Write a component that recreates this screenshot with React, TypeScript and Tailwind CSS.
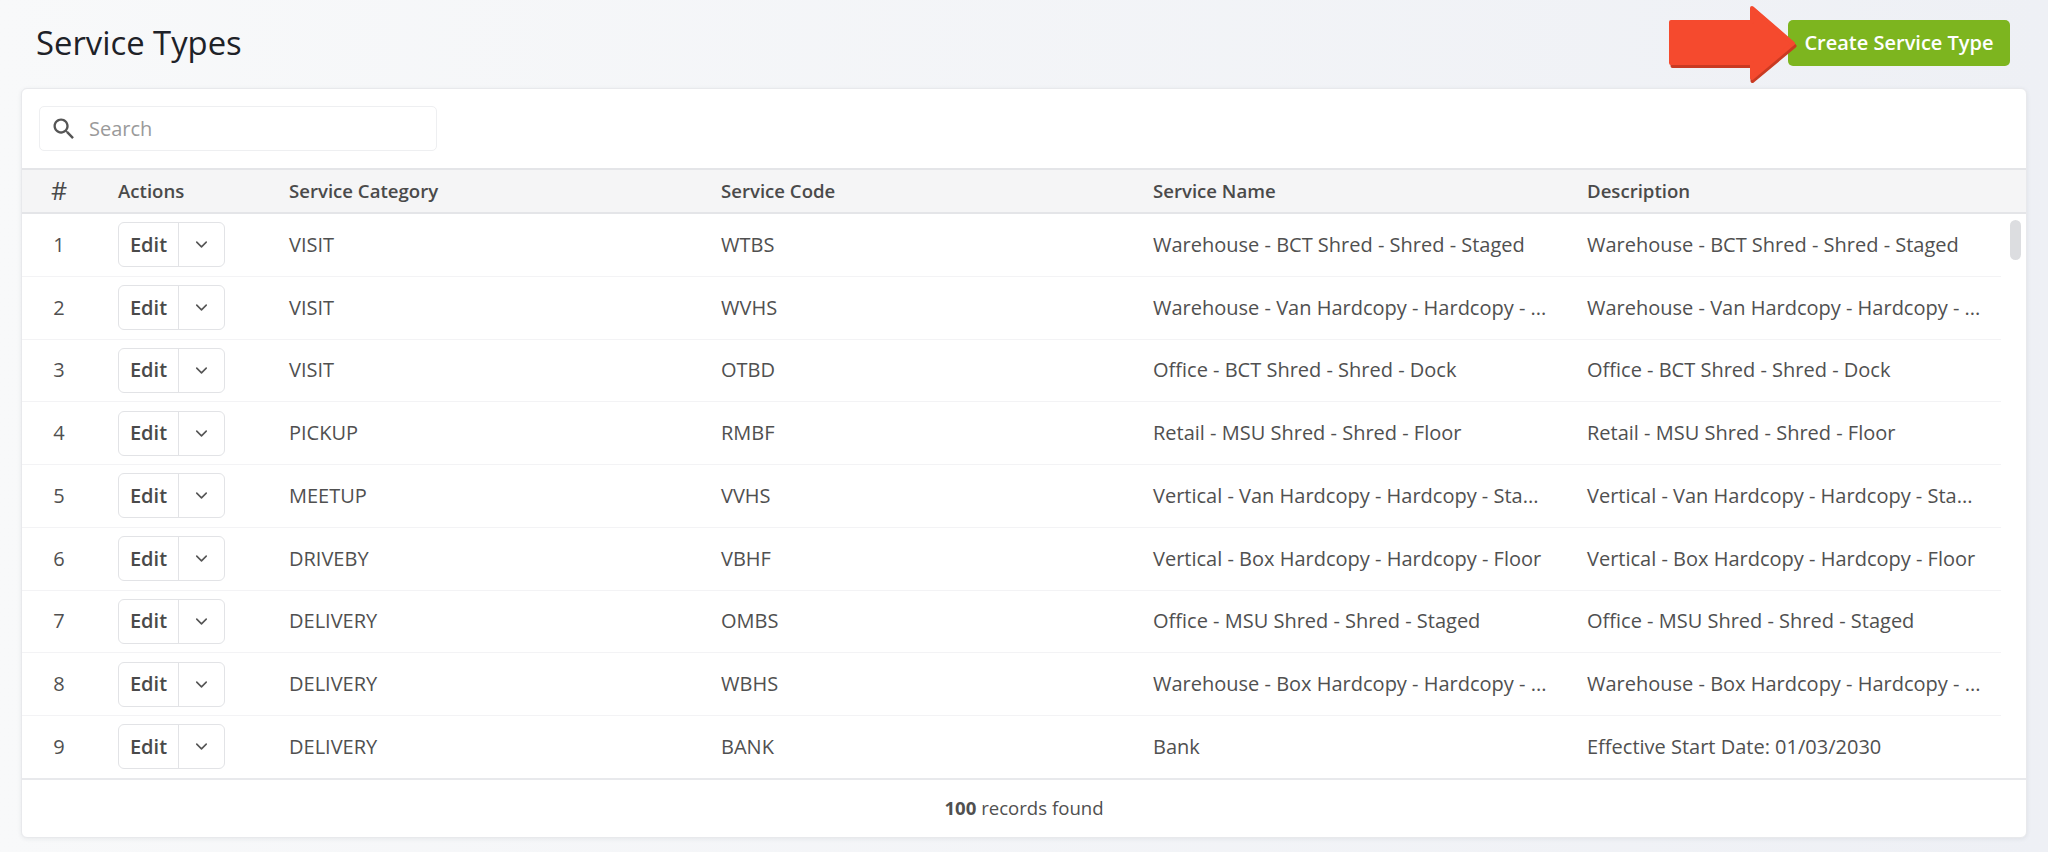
import { ChevronDown } from "lucide-react";

const rows = [
  ["VISIT", "WTBS", "Warehouse - BCT Shred - Shred - Staged", "Warehouse - BCT Shred - Shred - Staged"],
  ["VISIT", "WVHS", "Warehouse - Van Hardcopy - Hardcopy - ...", "Warehouse - Van Hardcopy - Hardcopy - ..."],
  ["VISIT", "OTBD", "Office - BCT Shred - Shred - Dock", "Office - BCT Shred - Shred - Dock"],
  ["PICKUP", "RMBF", "Retail - MSU Shred - Shred - Floor", "Retail - MSU Shred - Shred - Floor"],
  ["MEETUP", "VVHS", "Vertical - Van Hardcopy - Hardcopy - Sta...", "Vertical - Van Hardcopy - Hardcopy - Sta..."],
  ["DRIVEBY", "VBHF", "Vertical - Box Hardcopy - Hardcopy - Floor", "Vertical - Box Hardcopy - Hardcopy - Floor"],
  ["DELIVERY", "OMBS", "Office - MSU Shred - Shred - Staged", "Office - MSU Shred - Shred - Staged"],
  ["DELIVERY", "WBHS", "Warehouse - Box Hardcopy - Hardcopy - ...", "Warehouse - Box Hardcopy - Hardcopy - ..."],
  ["DELIVERY", "BANK", "Bank", "Effective Start Date: 01/03/2030"],
];

const grid = "grid grid-cols-[74px_193px_432px_432px_434px_1fr] items-center";

export default function App() {
  return (
    <div className="h-[852px] w-[2048px] overflow-hidden bg-gradient-to-r from-[#f8f9fa] to-[#eef0f5] font-['Open_Sans',sans-serif] text-[20px] text-[#505050]">
      <header className="relative flex h-[88px] items-start justify-between pl-[36px] pr-[38px]">
        <h1 className="mt-[20px] text-[32.8px] leading-[46px] font-normal text-[#1e2228]">Service Types</h1>
        <button className="mt-[20px] flex h-[46px] w-[222px] items-center justify-center rounded-[5px] bg-[#7db51f] text-[20px] font-semibold text-white">
          Create Service Type
        </button>
        <svg className="absolute left-[1665px] top-[2px]" width="135" height="82" viewBox="0 0 135 82">
          <path d="M7 20 H87 V6 L129 43 L87 78 V63 H7 Z" fill="#c93a22" stroke="#c93a22" strokeWidth="4" strokeLinejoin="round" transform="translate(0.5 1)" />
          <path d="M6 20 H87 V6 L128 41.5 L87 76 V61 H6 Z" fill="#f54a2e" stroke="#f54a2e" strokeWidth="4" strokeLinejoin="round" />
        </svg>
      </header>

      <main className="mx-[21px] h-[750px] rounded-[6px] border border-[#e8e9ec] bg-white shadow-[0_1px_4px_rgba(40,50,70,0.08)]">
        <div className="px-[17px] pt-[17px] pb-[17px]">
          <div className="flex h-[45px] w-[398px] items-center rounded-[5px] border border-[#eeeff1] pl-[10px]">
            <svg className="h-[28px] w-[28px] text-[#555]" viewBox="0 0 24 24" fill="currentColor">
              <path d="M15.5 14h-.79l-.28-.27C15.41 12.59 16 11.11 16 9.5 16 5.91 13.09 3 9.5 3S3 5.91 3 9.5 5.91 16 9.5 16c1.61 0 3.09-.59 4.23-1.57l.27.28v.79l5 4.99L20.49 19l-4.99-5zm-6 0C7.01 14 5 11.99 5 9.5S7.01 5 9.5 5 14 7.01 14 9.5 11.99 14 9.5 14z" />
            </svg>
            <span className="ml-[11px] text-[#9a9a9a]">Search</span>
          </div>
        </div>

        <div className={`${grid} h-[46px] border-y-2 border-[#e4e5e8] bg-[#f5f5f6] text-[18.6px] font-semibold text-[#4a4a4a]`}>
          <span className="text-center text-[25px] font-normal">#</span>
          <span className="pl-[22px]">Actions</span>
          <span>Service Category</span>
          <span>Service Code</span>
          <span>Service Name</span>
          <span>Description</span>
        </div>

        <div className="relative h-[564px] overflow-hidden pr-[25px]">
          {rows.map((r, i) => (
            <div key={i} className={`${grid} h-[62.75px] border-b border-[#f3f3f5] last:border-b-0`}>
              <span className="text-center">{i + 1}</span>
              <div className="pl-[22px]">
                <div className="flex h-[45px] w-[107px] items-center rounded-[6px] border border-[#e2e3e6] bg-white">
                  <span className="flex h-full w-[60px] items-center justify-center border-r border-[#e2e3e6] font-semibold text-[#4a4a4a]">Edit</span>
                  <span className="flex flex-1 items-center justify-center">
                    <ChevronDown className="h-[19px] w-[19px] text-[#555]" strokeWidth={2} />
                  </span>
                </div>
              </div>
              <span>{r[0]}</span>
              <span>{r[1]}</span>
              <span>{r[2]}</span>
              <span>{r[3]}</span>
            </div>
          ))}
          <div className="absolute right-[5px] top-[6px] h-[40px] w-[11px] rounded-full bg-[#dcdde0]" />
        </div>

        <div className="flex h-[59px] items-center justify-center border-t-2 border-[#e8e9ec] pb-[2px] text-[18.6px]">
          <span><b className="font-bold">100</b> records found</span>
        </div>
      </main>
    </div>
  );
}
